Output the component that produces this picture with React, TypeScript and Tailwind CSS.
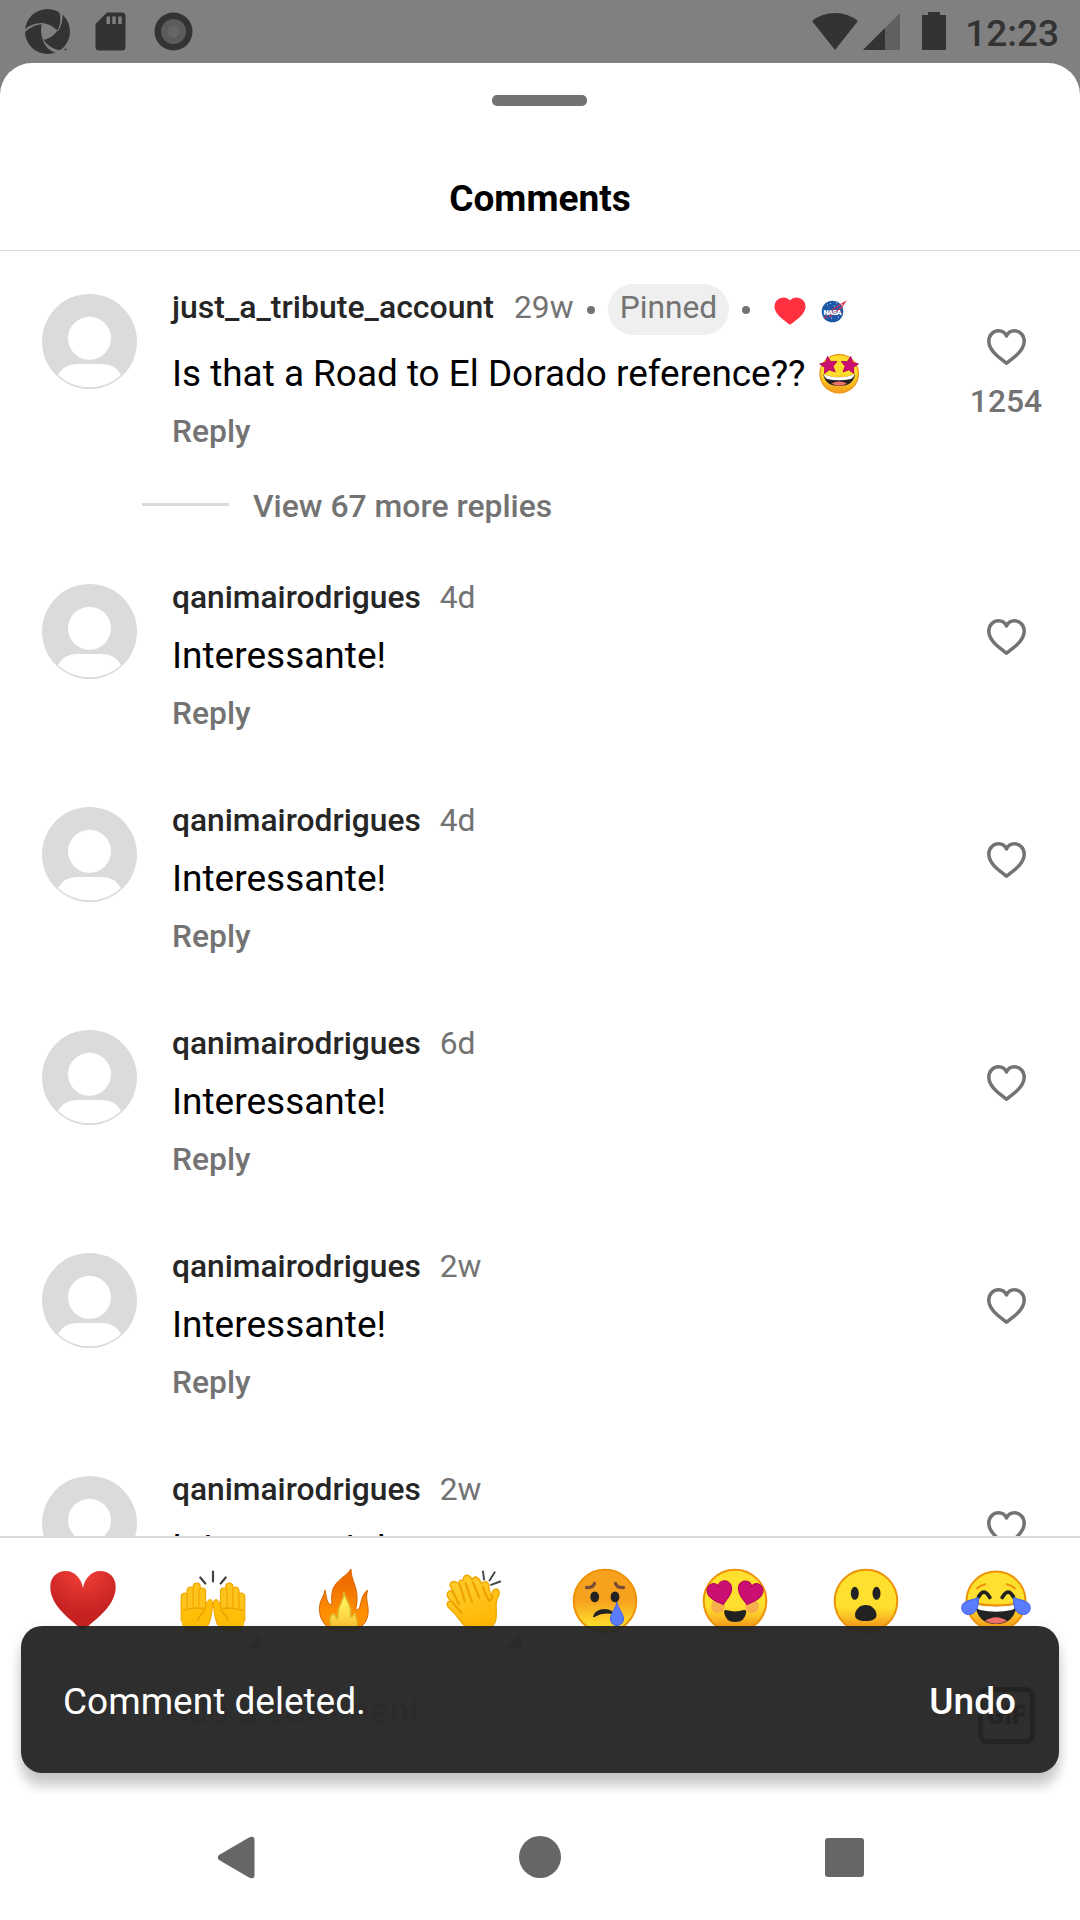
import React, { ReactNode } from "react";

const HEART =
  "M19.5 34.2 C16.8 31.9 13.2 29.5 9.6 26.2 C5 22 1.8 17.9 1.8 12.2 C1.8 6.2 6.2 1.8 11.6 1.8 C15.2 1.8 18 3.8 19.5 7 C21 3.8 23.8 1.8 27.4 1.8 C32.8 1.8 37.2 6.2 37.2 12.2 C37.2 17.9 34 22 29.4 26.2 C25.8 29.5 22.2 31.9 19.5 34.2 Z";

const STAR = "M0 -10 L2.9 -3.6 L9.8 -2.9 L4.7 1.9 L6.2 8.6 L0 5.2 L-6.2 8.6 L-4.7 1.9 L-9.8 -2.9 L-2.9 -3.6 Z";

function StatusBar() {
  return (
    <div className="flex h-[63px] items-start justify-between bg-[#808080] pl-[25px] pr-[21px]">
      <div className="flex items-start">
        <svg className="mt-[9px]" width="45" height="45" viewBox="0 0 45 45">
          <circle cx="22.5" cy="22.5" r="22.5" fill="#333" />
          <path d="M17 14 Q25 14.5 32.5 21.5 Q27.5 29 18 31 Q14.5 22 17 14 Z" fill="#808080" />
          <path d="M32 22 Q37.5 13.5 34 2 L37.5 4 Q38.5 14 33 22 Z" fill="#808080" />
          <path d="M18 14 Q7 13.5 0 20.5 L0 23 Q8 15.5 18 15 Z" fill="#808080" />
          <path d="M17.5 30.5 Q21 41 31 44 L35 41.5 Q24 39 18.2 30.5 Z" fill="#808080" />
          <path d="M31 43.5 L36 40.5 L44 44 L34 47 Z" fill="#808080" />
          <circle cx="40.5" cy="40.5" r="1" fill="#333" />
        </svg>
        <svg className="ml-[25px] mt-[12px]" width="31" height="39" viewBox="0 0 31 39">
          <path d="M12 .5 H27 Q30.5 .5 30.5 4 V35 Q30.5 38.5 27 38.5 H4 Q.5 38.5 .5 35 V12 Z" fill="#333" />
          <path d="M11.5 4.5h3.5v7.5h-3.5zM17.3 4.5h3.5v7.5h-3.5zM23.2 4.5h3.5v7.5h-3.5z" fill="#808080" />
        </svg>
        <svg className="ml-[28px] mt-[12px]" width="39" height="39" viewBox="0 0 39 39">
          <circle cx="19.5" cy="19.5" r="19" fill="#333" />
          <circle cx="19.5" cy="19.5" r="12.5" fill="#5c5c5c" />
          <circle cx="19.5" cy="19.5" r="6" fill="#666" />
        </svg>
      </div>
      <div className="flex items-start">
        <svg className="mt-[13px]" width="46" height="37" viewBox="0 0 46 37">
          <path d="M0 8 Q10 0 23 0 Q36 0 46 8 L23 37 Z" fill="#333" />
        </svg>
        <svg className="ml-[5px] mt-[13px]" width="37" height="37" viewBox="0 0 37 37">
          <path d="M37 0 V37 H0 Z" fill="#606060" />
          <path d="M22 15 V37 H0 Z" fill="#333" />
        </svg>
        <svg className="ml-[22px] mt-[12px]" width="24" height="38" viewBox="0 0 24 38">
          <path d="M6 0 H18 V3 H24 V38 H0 V3 H6 Z" fill="#333" />
        </svg>
        <span className="ml-[19px] mt-[12px] text-[37px] font-medium leading-[44px] text-[#333]">12:23</span>
      </div>
    </div>
  );
}

function Avatar() {
  return (
    <svg className="shrink-0" width="95" height="95" viewBox="0 0 95 95">
      <circle cx="47.5" cy="47.5" r="47.5" fill="#dbdbdb" />
      <circle cx="47.5" cy="44.3" r="21.5" fill="#fff" />
      <path d="M16 81 Q22 70 35 70 H60 Q73 70 79 81 Q66 93.3 47.5 93.3 Q29 93.3 16 81 Z" fill="#fff" />
    </svg>
  );
}

function Like({ count }: { count?: string }) {
  return (
    <div className="mt-[35px] flex w-[100px] shrink-0 flex-col items-center">
      <svg width="39" height="36" viewBox="0 0 39 36">
        <path d={HEART} fill="none" stroke="#737373" strokeWidth="3.5" strokeLinejoin="round" />
      </svg>
      {count && <span className="mt-[16px] text-[31.8px] font-medium leading-[40px] text-[#737373]">{count}</span>}
    </div>
  );
}

function Comment({ time }: { time: string }) {
  return (
    <div className="flex h-[223px] items-start pl-[42px] pr-[24px]">
      <Avatar />
      <div className="-mt-[8px] ml-[35px] flex grow flex-col">
        <div className="flex gap-[19px] text-[31.75px] leading-[44px]">
          <span className="font-medium text-[#262626]">qanimairodrigues</span>
          <span className="text-[#737373]">{time}</span>
        </div>
        <span className="mt-[14px] text-[37px] leading-[44px] text-black">Interessante!</span>
        <span className="mt-[15px] text-[31.8px] font-medium leading-[40px] text-[#737373]">Reply</span>
      </div>
      <Like />
    </div>
  );
}

function StarStruck() {
  return (
    <svg className="ml-[12px]" width="42" height="42" viewBox="0 0 42 42">
      <defs>
        <linearGradient id="struck" x1="0" y1="0" x2="0" y2="1">
          <stop offset=".5" stopColor="#fddc2c" />
          <stop offset="1" stopColor="#f59b1c" />
        </linearGradient>
      </defs>
      <circle cx="21.2" cy="20.8" r="19.2" fill="url(#struck)" stroke="#ee9210" strokeWidth="1.2" />
      <path d="M5.3 21.5 Q21 27 37 21.5 Q35 33 21.2 33 Q7.500 33 5.300 21.500 Z" fill="#222" />
      <path d="M5.8 21.5 Q21 27 36.500 21.500 Q35.500 25 33 26 Q21 28.500 9 26 Q6.500 25 5.800 21.500 Z" fill="#fff" />
      <path d="M13.500 30.500 Q21 26.500 29 30.500 Q21 35 13.500 30.500 Z" fill="#f0726a" />
      <path d={STAR} transform="translate(10.700 12.200) rotate(-8) scale(.88)" fill="#cb0f73" stroke="#b8005e" strokeLinejoin="round" />
      <path d={STAR} transform="translate(31.500 12.200) rotate(8) scale(.88)" fill="#cb0f73" stroke="#b8005e" strokeLinejoin="round" />
    </svg>
  );
}

function PinnedComment() {
  return (
    <div className="flex h-[202px] items-start pl-[42px] pr-[24px]">
      <Avatar />
      <div className="-mt-[10px] ml-[35px] flex grow flex-col">
        <div className="flex h-[51px] items-center text-[31.75px] leading-[44px] text-[#737373]">
          <span className="mb-[5px] w-[323px] text-[32px] font-medium text-[#262626]">just_a_tribute_account</span>
          <span className="mb-[3px] ml-[19px] w-[60px]">29w</span>
          <span className="ml-[13px] mt-px size-[8px] rounded-full bg-[#737373]" />
          <span className="ml-[13px] flex h-[51px] w-[121px] justify-center rounded-full bg-[#efefef] pt-[2px]">Pinned</span>
          <span className="ml-[13px] mt-px size-[8px] rounded-full bg-[#737373]" />
          <svg className="ml-[24px] mt-[3px]" width="32" height="28" viewBox="0 0 39 36" preserveAspectRatio="none">
            <path d={HEART} fill="#ff3040" stroke="#ff3040" strokeWidth="2.5" />
          </svg>
          <svg className="ml-[15px] mt-[2px]" width="26" height="24" viewBox="0 0 26 24">
            <circle cx="11.500" cy="12.500" r="10.800" fill="#2058a8" />
            <path d="M6 6h1M15 4h1M10 19h1M17 18h1M9 4.500h1M13 7h1" stroke="#bcd0f0" strokeWidth="1" />
            <path d="M3 20 Q10 10 24 3 L20 9 Q12 15 8 18" fill="none" stroke="#d8304a" strokeWidth="1.2" />
            <text x="11.500" y="15.600" textAnchor="middle" fontSize="7.500" fontWeight="900" fill="#fff" textLength="18">NASA</text>
          </svg>
        </div>
        <div className="mt-[17px] flex h-[44px] items-center text-[36.9px] leading-[44px] text-black">
          <span>Is that a Road to El Dorado reference??</span>
          <StarStruck />
        </div>
        <span className="mt-[15px] text-[31.8px] font-medium leading-[40px] text-[#737373]">Reply</span>
      </div>
      <Like count="1254" />
    </div>
  );
}

function Face({ id, from, to, split, children }: { id: string; from: string; to: string; split: string; children: ReactNode }) {
  return (
    <>
      <defs>
        <linearGradient id={id} x1="0" y1="0" x2="0" y2="1">
          <stop offset={split} stopColor={from} />
          <stop offset=".9" stopColor={to} />
        </linearGradient>
      </defs>
      <circle cx="35" cy="34" r="31.300" fill={`url(#${id})`} stroke="#ee9208" strokeWidth="2" />
      {children}
    </>
  );
}

function RedHeart() {
  return (
    <>
      <defs>
        <radialGradient id="red" cx=".5" cy="0" r=".7">
          <stop offset=".2" stopColor="#e93a34" />
          <stop offset="1" stopColor="#c62222" />
        </radialGradient>
      </defs>
      <path
        d="M35 64 C27 55 2.300 41 2.300 20 C2.300 10 9 4 18 4 C27 4 33.500 12 35 21 C36.500 12 43 4 52 4 C61 4 67.700 10 67.700 20 C67.700 41 43 55 35 64 Z"
        fill="url(#red)"
      />
    </>
  );
}

function RaisedHand() {
  return (
    <>
      <g fill="#ffc41c" stroke="#f0a500" strokeWidth="1.200">
        <rect x="3.200" y="26" width="7.200" height="30" rx="3.600" />
        <rect x="9" y="20" width="7.500" height="30" rx="3.700" />
        <rect x="15.200" y="16.200" width="7" height="34" rx="3.500" />
        <rect x="21" y="21" width="6.500" height="30" rx="3.200" />
      </g>
      <path
        d="M3.800 41 Q15 40 27 41 Q28.500 33 32 32.500 Q35 33 34.600 38 Q34 50 30.500 58 Q28 64 22 64 H11 Q5 64 4 57 Z"
        fill="#ffbf08"
      />
      <path d="M5 43.500 Q14 40 25 41.500 M26.800 40 Q27 45 22 49 Q20 52 20 54" fill="none" stroke="#eda200" strokeWidth="1.500" />
      <path d="M27.500 40 Q28.500 33 32 32.500 Q35 33 34.600 38 Q34 50 30.500 58" fill="none" stroke="#f0a500" />
    </>
  );
}

function RaisedHands() {
  return (
    <>
      <RaisedHand />
      <g transform="translate(70 0) scale(-1 1)">
        <RaisedHand />
      </g>
      <path d="M35 4.500 V14.500 M22.300 10.500 L27.300 16.500 M47.700 10.500 L42.700 16.500" stroke="#444" strokeWidth="2.200" strokeLinecap="round" />
    </>
  );
}

function Fire() {
  return (
    <>
      <defs>
        <linearGradient id="flame" x1="0" y1="0" x2="0" y2="1">
          <stop offset=".2" stopColor="#ef6c00" />
          <stop offset=".7" stopColor="#ff9100" />
        </linearGradient>
        <linearGradient id="core" x1="0" y1="0" x2="0" y2="1">
          <stop offset=".3" stopColor="#ffee58" />
          <stop offset="1" stopColor="#fdb92c" />
        </linearGradient>
      </defs>
      <path
        d="M42 2 C42 14 49 19 48 34 C47.500 40 46 43 48 43 C53 42 50 30 58.500 23 C56 35 60 36 59 47 C57.500 59 47 65.500 35 65.500 C20 65.500 10.500 55 10.500 42 C10.500 32 15 31 15.800 23 C18 30 17 36 22.500 38 C23.500 36 21.500 29 24 22 C28 12 37 10 42 2 Z"
        fill="url(#flame)"
        stroke="#d86400"
        strokeWidth="1"
      />
      <path
        d="M35 25 C36 33 43 38 41.500 47 C41 52 43 50 46.500 46 C45.500 50 48.500 51 48.300 57 C47 63 41 65 35 65 C26 65 20.500 60 21 53 C21 47 25 46 26 48.500 C28 54 29 52 29 47 C29 38 35 34 35 25 Z"
        fill="url(#core)"
        stroke="#dcb82e"
        strokeWidth="1.500"
      />
    </>
  );
}

function Clap() {
  return (
    <>
      <defs>
        <linearGradient id="palm" x1=".2" y1="0" x2=".6" y2="1">
          <stop offset=".2" stopColor="#ffca28" />
          <stop offset=".9" stopColor="#ffb806" />
        </linearGradient>
      </defs>
      <path
        d="M24 57 Q17 47 9.500 40.500 Q7 37 9 35 Q11 33 14 35.500 Q7.500 31 8.300 26.500 Q9.500 22.500 14 24 Q9.500 18 12 15.500 Q15.500 13 20 17 Q19 12.500 24.500 13 Q24 8.500 28 8.200 Q31.500 8.500 33 13 Q34 9.700 37 10 Q40.500 11 42.500 17 Q44 14 47.500 14.800 Q50.500 16.500 50 21 Q51 27 53 30.500 Q52 22 58 22 Q61.500 24 59.500 29 Q56.500 34 57.200 42 V50 Q56 63.500 40 63.500 Q28 63.500 24 57 Z"
        fill="url(#palm)"
        stroke="#f0a800"
        strokeWidth="1.400"
        strokeLinejoin="round"
      />
      <path
        d="M20.800 18 L26 34.500 M26.500 16 L33 35 M34 15.500 L40.500 31 M44 20 Q46 28 50.500 34 M50.500 34 Q54 31 53 28 M14 25 L20 37 M14 36 L22.500 46"
        fill="none"
        stroke="#eda200"
        strokeWidth="2.200"
        strokeLinecap="round"
      />
      <path d="M44 4.500 L45 12.500 M55.700 5.300 L50.500 13.500 M61.200 14.500 L52 17.800" stroke="#444" strokeWidth="1.900" strokeLinecap="round" />
    </>
  );
}

function Crying() {
  return (
    <Face id="cry" from="#f6a21e" to="#ffe02e" split=".5">
      <g fill="#222">
        <ellipse cx="24.700" cy="29.900" rx="4.400" ry="5.400" />
        <ellipse cx="45" cy="29.900" rx="4.400" ry="5.400" />
        <path d="M23 49.500 Q25 42 35 42 Q43 42.500 45 48 Q34 44.500 25 49.800 Q23.500 51 23 49.500 Z" />
      </g>
      <path d="M16.500 20.500 Q23 21 24.500 16.500 M53.500 20.500 Q47 21 45.500 16.500" fill="none" stroke="#7b4b38" strokeWidth="3.300" strokeLinecap="round" />
      <path d="M46.900 35 C48 42 53.500 46 53.500 52 C53.500 56 50.500 58.500 47 58.500 C43.500 58.500 40.500 56 40.500 52 C40.500 46 45.800 42 46.900 35 Z" fill="#5c7cff" stroke="#4064e8" />
    </Face>
  );
}

function HeartEyes() {
  return (
    <Face id="love" from="#ffe02e" to="#f6a01e" split=".6">
      <circle cx="18" cy="39" r="7" fill="#f08a62" opacity=".55" />
      <circle cx="52" cy="39" r="7" fill="#f08a62" opacity=".55" />
      <g fill="#cb0f73" stroke="#b3005c" strokeWidth="1.500">
        <path d={HEART} transform="translate(4 17.500) rotate(-14) scale(.7)" />
        <path d={HEART} transform="translate(39.500 11) rotate(14) scale(.7)" />
      </g>
      <path d="M24 45 Q24 42.500 27 43.300 Q35 45.500 43 43.300 Q46.300 42.500 46.300 45 Q45 55 35 55 Q25.500 55 24 45 Z" fill="#222" />
    </Face>
  );
}

function Surprised() {
  return (
    <Face id="wow" from="#ffe02e" to="#f6a01e" split=".6">
      <g fill="#222">
        <ellipse cx="23.800" cy="26.300" rx="4" ry="6.500" />
        <ellipse cx="45.500" cy="26.300" rx="4" ry="6.500" />
        <path d="M34.700 38 C41 38 45.500 43 45.500 48 C45.500 52 41 54 34.700 54 C28 54 24 52 24 48 C24 43 28.500 38 34.700 38 Z" />
      </g>
    </Face>
  );
}

function Joy() {
  return (
    <>
      <defs>
        <linearGradient id="joy" x1="0" y1="0" x2="0" y2="1">
          <stop offset=".5" stopColor="#ffe02e" />
          <stop offset=".95" stopColor="#f6a01e" />
        </linearGradient>
      </defs>
      <circle cx="35" cy="34" r="29.500" fill="url(#joy)" stroke="#ee9208" strokeWidth="2" />
      <path d="M14 36 Q35 41 56 36 Q54 57 35 57 Q16 57 14 36 Z" fill="#222" />
      <path d="M14.500 37.500 Q35 41 55.500 37.500 Q54 42 51 43 Q35 46.500 19 43 Q15.500 42 14.500 37.500 Z" fill="#fff" />
      <path d="M12 36 Q35 41 58 36" fill="none" stroke="#ee9208" strokeWidth="2" />
      <path d="M24 54 Q35 46.500 46 54 Q35 59.500 24 54 Z" fill="#f0726a" />
      <path d="M17.500 30 Q23 20 28.800 30.500 M41.200 30.500 Q47 20 52.500 30" fill="none" stroke="#222" strokeWidth="3.700" strokeLinecap="round" />
      <path d="M16 21.500 Q19 18.500 24.500 17.300 M45.500 17.300 Q51 18.500 54 21.500" fill="none" stroke="#ee9208" strokeWidth="2" strokeLinecap="round" />
      <g fill="#5c7cff" stroke="#4064e8">
        <path d="M17.600 30.500 C18 38 16 47.500 7.500 47.500 C3 47.500 .7 44 .7 41 C.7 33 11 33.500 17.600 30.500 Z" />
        <path d="M52.400 30.500 C52 38 54 47.500 62.500 47.500 C67 47.500 69.300 44 69.300 41 C69.300 33 59 33.500 52.400 30.500 Z" />
      </g>
    </>
  );
}

const REACTIONS = [
  { name: "heart", Art: RedHeart },
  { name: "raised hands", Art: RaisedHands },
  { name: "fire", Art: Fire },
  { name: "clap", Art: Clap },
  { name: "crying", Art: Crying },
  { name: "heart eyes", Art: HeartEyes },
  { name: "surprised", Art: Surprised },
  { name: "tears of joy", Art: Joy },
];

export default function App() {
  return (
    <div className="flex h-[1920px] w-[1080px] flex-col overflow-hidden bg-[#808080] font-[Roboto,sans-serif]">
      <StatusBar />
      <div className="flex h-[1731px] flex-col overflow-hidden rounded-t-[32px] bg-white">
        <div className="flex h-[188px] shrink-0 flex-col items-center border-b border-[#dbdbdb] pt-[32px]">
          <div className="mr-px h-[11px] w-[95px] rounded-[5px] bg-[#737373]" />
          <h1 className="mt-[71px] text-[37px] font-bold leading-[44px] text-black">Comments</h1>
        </div>
        <div className="h-[1285px] shrink-0 overflow-hidden pt-[43px]">
          <PinnedComment />
          <div className="flex h-[88px] items-start pl-[142px]">
            <div className="mt-[7px] h-[3px] w-[87px] bg-[#dbdbdb]" />
            <span className="-mt-[10px] ml-[24px] text-[31.9px] font-medium leading-[40px] text-[#737373]">
              View 67 more replies
            </span>
          </div>
          <Comment time="4d" />
          <Comment time="4d" />
          <Comment time="6d" />
          <Comment time="2w" />
          <Comment time="2w" />
        </div>
        <div className="relative flex h-[258px] shrink-0 flex-col overflow-hidden border-t-2 border-[#dbdbdb]">
          <div className="flex justify-between pl-[48px] pr-[49px] pt-[29px]">
            {REACTIONS.map(({ name, Art }) => (
              <svg key={name} aria-label={name} width="70" height="70" viewBox="0 0 70 70">
                <Art />
              </svg>
            ))}
          </div>
          <svg className="absolute left-[247px] top-[96px]" width="274" height="14" viewBox="0 0 274 14">
            <path d="M13 0v14h-13zM274 0v14h-14z" fill="#a8a8a8" />
          </svg>
          <div className="mt-[33px] flex items-start pl-[33px] pr-[45px]">
            <div className="size-[94px] rounded-full border border-[#c8c8c8]" />
            <span className="ml-[37px] mt-[20px] grow text-[37px] leading-[44px] tracking-[-0.4px] text-[#c4c4c4]">Add a comment...</span>
            <div className="mt-[17px] flex size-[57px] items-center justify-center rounded-[9px] border-[5px] border-[#262626] text-[25px] font-black text-[#262626]">
              GIF
            </div>
          </div>
          <div className="absolute left-[21px] top-[88px] flex h-[147px] w-[1038px] items-center justify-between rounded-[21px] bg-[#232323]/95 pl-[42px] pr-[43px] pt-[5px] text-[37px] leading-[44px] text-white shadow-[0_14px_12px_rgba(0,0,0,0.17),0_4px_14px_rgba(0,0,0,0.1)]">
            <span>Comment deleted.</span>
            <span className="font-medium">Undo</span>
          </div>
        </div>
      </div>
      <div className="flex h-[126px] items-center bg-white pl-[217px]">
        <svg width="38" height="43" viewBox="0 0 38 43">
          <path d="M2 19 L32 1.500 Q37.500 -1 37.500 4 V39 Q37.500 44 32 41.500 L2 24 Q-.5 21.500 2 19 Z" fill="#666" />
        </svg>
        <div className="ml-[264px] size-[42px] rounded-full bg-[#666]" />
        <div className="ml-[264px] size-[39px] rounded-[3px] bg-[#666]" />
      </div>
    </div>
  );
}
